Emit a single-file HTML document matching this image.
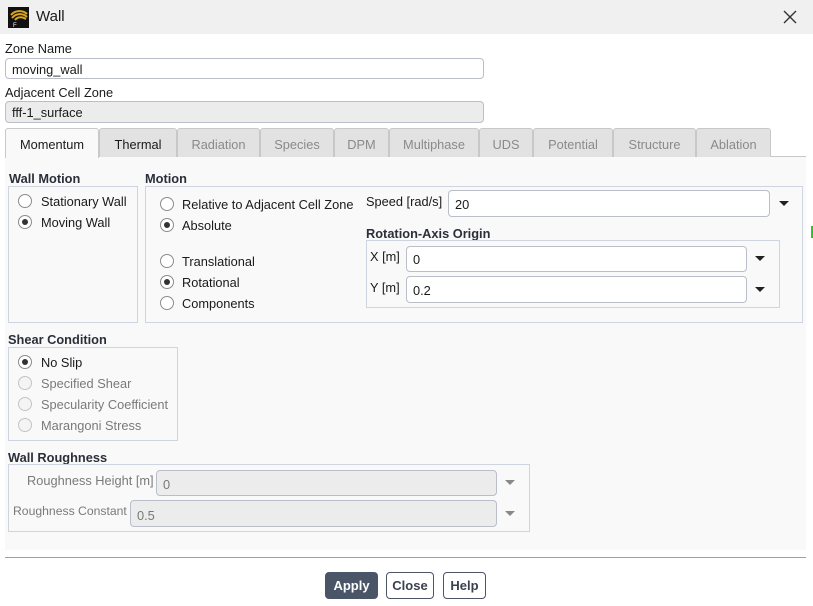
<!DOCTYPE html>
<html><head><style>
*{box-sizing:border-box;margin:0;padding:0}
body{width:813px;height:606px;background:#fff;font-family:"Liberation Sans",sans-serif;font-size:12.8px;color:#1a1a1a;position:relative;overflow:hidden}
.a{position:absolute;white-space:nowrap}
.t{margin-top:1px}
.tb{left:0;top:0;width:813px;height:34px;background:#f0f0f0}
.inp{position:absolute;border:1px solid #b9bec8;border-radius:4px;background:#fff;padding-left:6px;line-height:21px}
.dis{background:#ececec}
.tab{position:absolute;top:128px;height:29px;border:1px solid #c8c8c8;border-bottom:none;border-radius:3px 3px 0 0;background:#e2e2e2;color:#8a8a8a;text-align:center;line-height:31px;font-size:12.8px}
.box{position:absolute;border:1px solid #cfd5e0}
.b{font-weight:bold;color:#2a2f3a}
.r{position:absolute;width:14px;height:14px;border:1px solid #8c8c8c;border-radius:50%;background:#fff;margin-top:1px}
.r.on::after{content:"";position:absolute;left:3px;top:3px;width:6px;height:6px;border-radius:50%;background:#333}
.r.g{border-color:#c4c4c4;background:#f4f4f4}
.arr{position:absolute;width:0;height:0;border-left:5px solid transparent;border-right:5px solid transparent;border-top:5px solid #222}
.arr.g{border-top-color:#888}
.gr{color:#7a7a7a}
.btn{position:absolute;top:572px;height:27px;border:1px solid #4a5568;border-radius:4px;font-weight:bold;text-align:center;line-height:26px;color:#3a4250;background:#fff;font-size:13px}
</style></head><body>
<div class="a tb"></div>
<svg class="a" style="left:8px;top:7px" width="21" height="21"><rect width="21" height="21" fill="#111"/><path d="M3 8 C7 3 15 3 19 7 M4 11 C8 6 15 6 19 10 M7 13 C10 9 15 10 18 12" stroke="#d9a520" stroke-width="2" fill="none"/><text x="5" y="20" font-size="6" fill="#fff" font-family="Liberation Sans">F</text></svg>
<div class="a" style="left:36px;top:8px;font-size:15px">Wall</div>
<svg class="a" style="left:783px;top:10px" width="14" height="14"><path d="M1 1L13 13M13 1L1 13" stroke="#333" stroke-width="1.4"/></svg>

<div class="a t" style="left:5px;top:40px">Zone Name</div>
<div class="inp" style="left:5px;top:58px;width:479px;height:21px">moving_wall</div>
<div class="a t" style="left:5px;top:84px">Adjacent Cell Zone</div>
<div class="inp dis" style="left:5px;top:101px;width:479px;height:22px">fff-1_surface</div>

<div class="a" style="left:5px;top:156px;width:801px;height:1px;background:#c8c8c8"></div>
<div class="a" style="left:5px;top:157px;width:801px;height:393px;background:#f9f9f9"></div>
<div class="tab" style="left:5px;width:94px;background:#f9f9f9;color:#1a1a1a;height:30px">Momentum</div>
<div class="tab" style="left:99px;width:78px;color:#1a1a1a">Thermal</div>
<div class="tab" style="left:177px;width:83px">Radiation</div>
<div class="tab" style="left:260px;width:74px">Species</div>
<div class="tab" style="left:334px;width:55px">DPM</div>
<div class="tab" style="left:389px;width:90px">Multiphase</div>
<div class="tab" style="left:479px;width:54px">UDS</div>
<div class="tab" style="left:533px;width:80px">Potential</div>
<div class="tab" style="left:613px;width:83px">Structure</div>
<div class="tab" style="left:696px;width:75px">Ablation</div>

<div class="a b t" style="left:9px;top:170px">Wall Motion</div>
<div class="box" style="left:8px;top:186px;width:130px;height:137px"></div>
<div class="r" style="left:18px;top:193px"></div><div class="a t" style="left:41px;top:193px">Stationary Wall</div>
<div class="r on" style="left:18px;top:214px"></div><div class="a t" style="left:41px;top:214px">Moving Wall</div>

<div class="a b t" style="left:145px;top:170px">Motion</div>
<div class="box" style="left:145px;top:186px;width:658px;height:137px"></div>
<div class="r" style="left:160px;top:196px"></div><div class="a t" style="left:182px;top:196px">Relative to Adjacent Cell Zone</div>
<div class="r on" style="left:160px;top:217px"></div><div class="a t" style="left:182px;top:217px">Absolute</div>
<div class="r" style="left:160px;top:253px"></div><div class="a t" style="left:182px;top:253px">Translational</div>
<div class="r on" style="left:160px;top:274px"></div><div class="a t" style="left:182px;top:274px">Rotational</div>
<div class="r" style="left:160px;top:295px"></div><div class="a t" style="left:182px;top:295px">Components</div>

<div class="a t" style="left:366px;top:193px">Speed [rad/s]</div>
<div class="inp" style="left:448px;top:190px;width:322px;height:27px;line-height:27px">20</div>
<div class="arr" style="left:779px;top:201px"></div>
<div class="a b t" style="left:366px;top:225px">Rotation-Axis Origin</div>
<div class="box" style="left:366px;top:240px;width:414px;height:68px"></div>
<div class="a t" style="left:370px;top:248px">X [m]</div>
<div class="inp" style="left:406px;top:246px;width:341px;height:26px;line-height:26px">0</div>
<div class="arr" style="left:755px;top:256px"></div>
<div class="a t" style="left:370px;top:279px">Y [m]</div>
<div class="inp" style="left:406px;top:276px;width:341px;height:27px;line-height:27px">0.2</div>
<div class="arr" style="left:755px;top:287px"></div>

<div class="a b t" style="left:8px;top:331px">Shear Condition</div>
<div class="box" style="left:8px;top:347px;width:170px;height:94px"></div>
<div class="r on" style="left:18px;top:354px"></div><div class="a t" style="left:41px;top:354px">No Slip</div>
<div class="r g" style="left:18px;top:375px"></div><div class="a gr t" style="left:41px;top:375px">Specified Shear</div>
<div class="r g" style="left:18px;top:396px"></div><div class="a gr t" style="left:41px;top:396px">Specularity Coefficient</div>
<div class="r g" style="left:18px;top:417px"></div><div class="a gr t" style="left:41px;top:417px">Marangoni Stress</div>

<div class="a b t" style="left:8px;top:449px">Wall Roughness</div>
<div class="box" style="left:8px;top:464px;width:522px;height:68px"></div>
<div class="a gr t" style="left:27px;top:472px">Roughness Height [m]</div>
<div class="inp dis" style="left:156px;top:470px;width:341px;height:26px;line-height:28px;color:#777">0</div>
<div class="arr g" style="left:505px;top:480px"></div>
<div class="a gr t" style="left:13px;top:503px;font-size:12.2px">Roughness Constant</div>
<div class="inp dis" style="left:130px;top:500px;width:367px;height:27px;line-height:30px;color:#777">0.5</div>
<div class="arr g" style="left:505px;top:511px"></div>

<div class="a" style="left:5px;top:557px;width:801px;height:1px;background:#a0a0a0"></div>
<div class="btn" style="left:325px;width:53px;background:#4a5568;color:#fff">Apply</div>
<div class="btn" style="left:386px;width:48px">Close</div>
<div class="btn" style="left:443px;width:43px">Help</div>
<div class="a" style="left:811px;top:226px;width:2px;height:12px;background:#2c2"></div>
</body></html>
